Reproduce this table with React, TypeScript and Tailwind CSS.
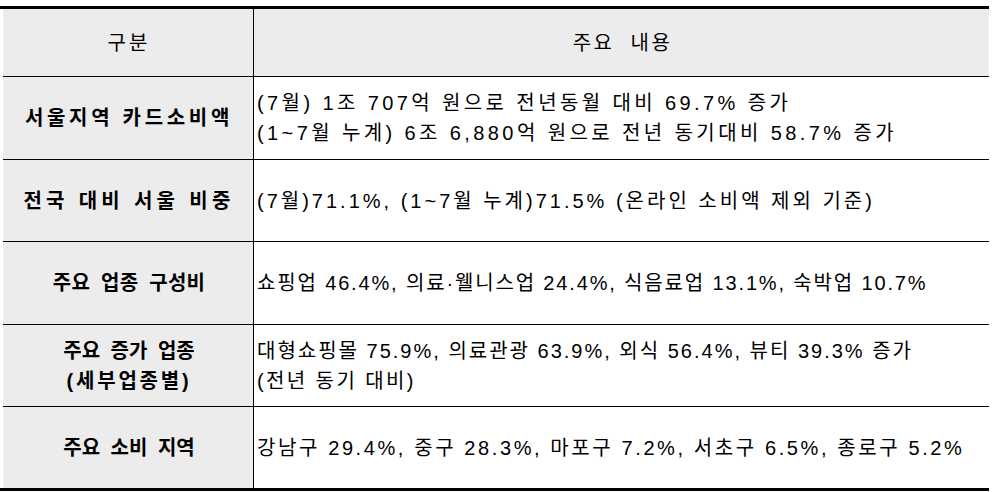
import React from 'react';

interface Line {
  text: string;
  track: string;
}

interface Row {
  label: Line[];
  lines: Line[];
  h: string;
}

// character spacing differs per line in the source document, so each line carries its own tracking
const rows: Row[] = [
  {
    label: [{ text: '서울지역 카드소비액', track: 'tracking-[3.7px]' }],
    lines: [
      { text: '(7월) 1조 707억 원으로 전년동월 대비 69.7% 증가', track: 'tracking-[3.4px]' },
      { text: '(1~7월 누계) 6조 6,880억 원으로 전년 동기대비 58.7% 증가', track: 'tracking-[3.4px]' },
    ],
    h: 'h-[83px]',
  },
  {
    label: [{ text: '전국 대비 서울 비중', track: 'tracking-[4.3px]' }],
    lines: [{ text: '(7월)71.1%, (1~7월 누계)71.5% (온라인 소비액 제외 기준)', track: 'tracking-[3px]' }],
    h: 'h-[82px]',
  },
  {
    label: [{ text: '주요 업종 구성비', track: 'tracking-[0.3px] [word-spacing:5px]' }],
    lines: [{ text: '쇼핑업 46.4%, 의료·웰니스업 24.4%, 식음료업 13.1%, 숙박업 10.7%', track: 'tracking-[1.85px]' }],
    h: 'h-[83px]',
  },
  {
    label: [
      { text: '주요 증가 업종', track: 'tracking-[0px] [word-spacing:5px]' },
      { text: '(세부업종별)', track: 'tracking-[2.8px]' },
    ],
    lines: [
      { text: '대형쇼핑몰 75.9%, 의료관광 63.9%, 외식 56.4%, 뷰티 39.3% 증가', track: 'tracking-[2px]' },
      { text: '(전년 동기 대비)', track: 'tracking-[2.4px]' },
    ],
    h: 'h-[82px]',
  },
  {
    label: [{ text: '주요 소비 지역', track: 'tracking-[0px] [word-spacing:5px]' }],
    lines: [{ text: '강남구 29.4%, 중구 28.3%, 마포구 7.2%, 서초구 6.5%, 종로구 5.2%', track: 'tracking-[2.6px]' }],
    h: 'h-[81px]',
  },
];

const font = { fontFamily: '"Liberation Sans", "Noto Sans CJK KR", sans-serif' };

export default function App() {
  return (
    <div className="h-[492px] w-[996px] bg-white pt-[6px] text-black" style={font}>
      <div className="w-[989px] border-t-[3px] border-b-[3px] border-black">
        {/* header */}
        <div className="ml-[3px] flex h-[68px] border-b border-black bg-[#ececec] text-[20px]">
          <div className="flex w-[251px] shrink-0 items-center justify-center border-r border-black pl-[2px] tracking-[3px]">
            구분
          </div>
          <div className="flex flex-1 items-center justify-center pl-[2px] tracking-[2.5px] [word-spacing:8px]">
            주요 내용
          </div>
        </div>
        {rows.map((r, i) => (
          <div
            key={i}
            className={`ml-[3px] flex ${r.h} ${i < rows.length - 1 ? 'border-b border-black' : ''} text-[20px]`}
          >
            <div className="flex w-[251px] shrink-0 flex-col items-center justify-center border-r border-black bg-[#ececec] font-bold leading-[30px]">
              {r.label.map((l) => (
                <div key={l.text} className={`whitespace-nowrap pl-[2px] ${l.track}`}>
                  {l.text}
                </div>
              ))}
            </div>
            <div className="flex min-w-0 flex-1 flex-col justify-center bg-white pl-[3px] leading-[30px]">
              {r.lines.map((l) => (
                <div key={l.text} className={`whitespace-nowrap ${l.track}`}>
                  {l.text}
                </div>
              ))}
            </div>
          </div>
        ))}
      </div>
    </div>
  );
}
